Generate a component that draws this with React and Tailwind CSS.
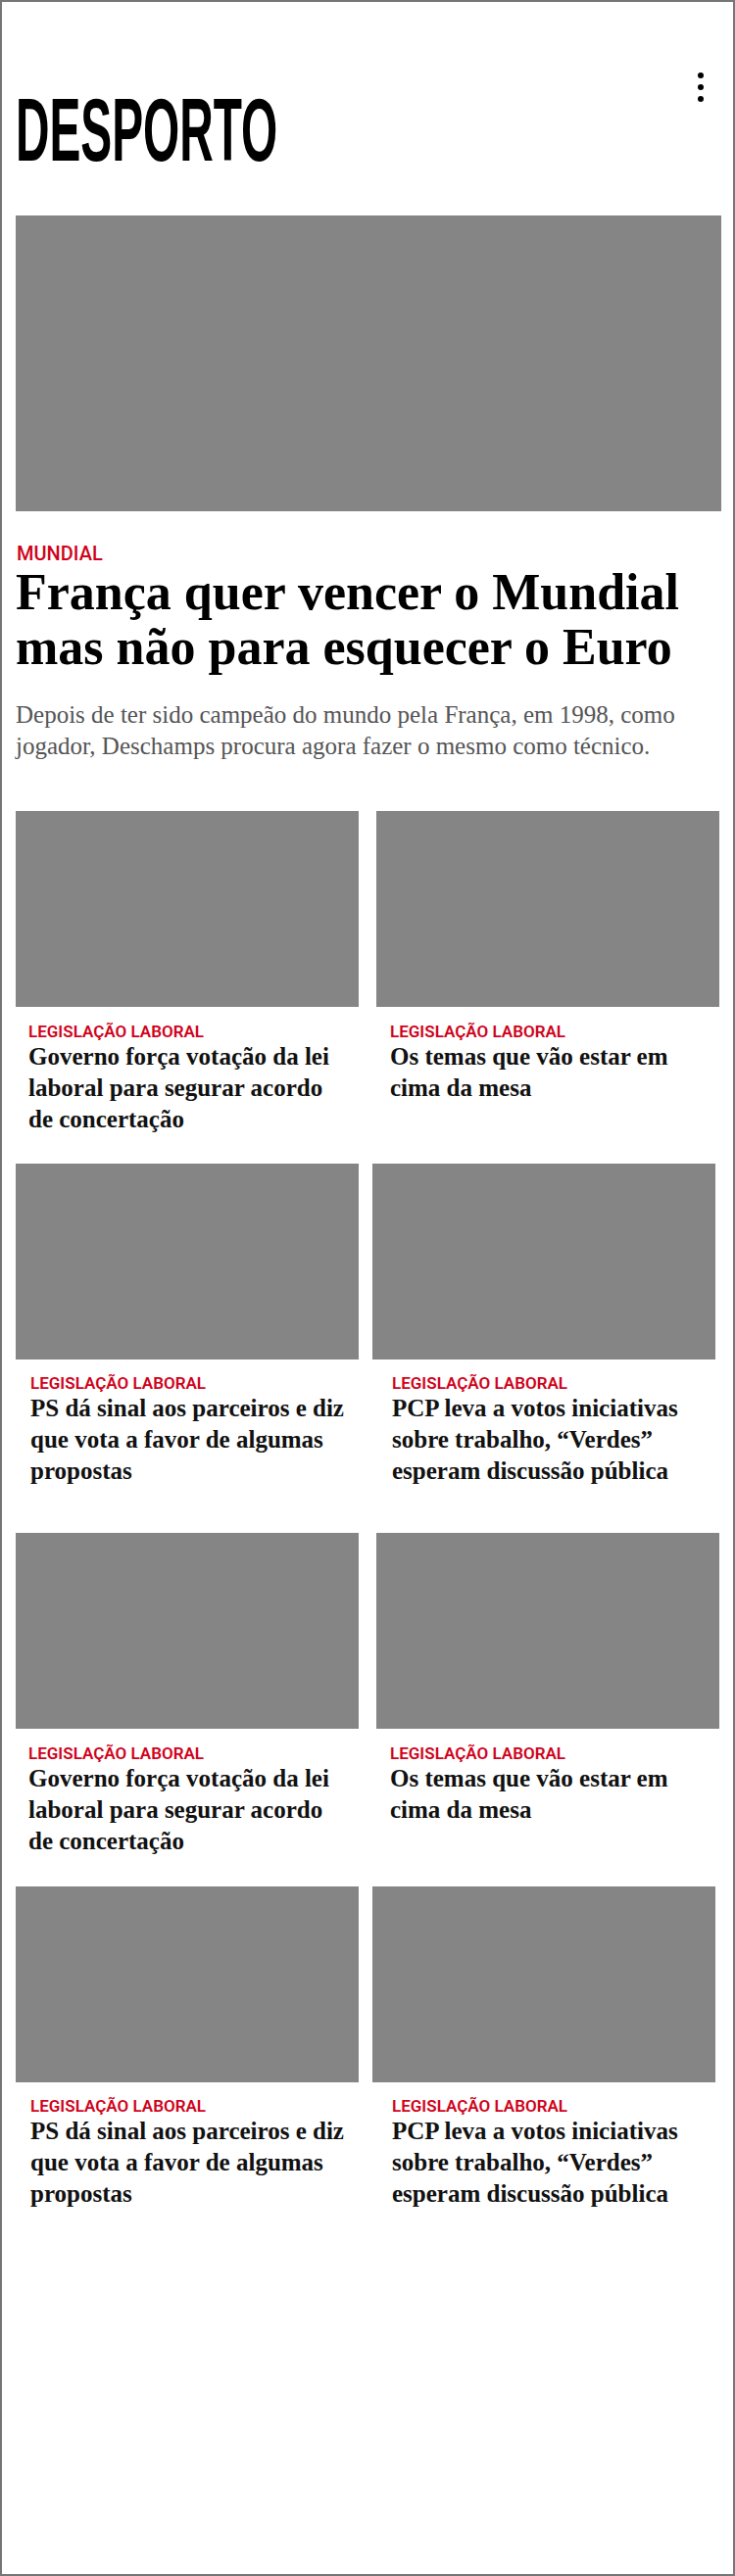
import React from 'react';

const rows = [
  {
    type: 'a',
    items: [
      { lines: ['Governo força votação da lei', 'laboral para segurar acordo', 'de concertação'] },
      { lines: ['Os temas que vão estar em', 'cima da mesa'] },
    ],
  },
  {
    type: 'b',
    items: [
      { lines: ['PS dá sinal aos parceiros e diz', 'que vota a favor de algumas', 'propostas'] },
      { lines: ['PCP leva a votos iniciativas', 'sobre trabalho, “Verdes”', 'esperam discussão pública'] },
    ],
  },
];

const serif = "font-['Liberation_Serif',_'Times_New_Roman',_serif]";

function Card({ lines, pad, labelGap }) {
  return (
    <div className="w-[350px] flex flex-col">
      <div className="w-[350px] h-[200px] bg-[#858585]" />
      <div className={pad}>
        <p className={`${labelGap} font-['Roboto',_sans-serif] font-semibold text-[17px] leading-[20px] text-[#d0021b] uppercase whitespace-nowrap`}>
          Legislação laboral
        </p>
        <h3 className={`${serif} font-bold text-[25px] leading-[32px] text-[#111] whitespace-nowrap`}>
          {lines.map((l, i) => (
            <span key={i} className="block">{l}</span>
          ))}
        </h3>
      </div>
    </div>
  );
}

function RowA({ items, className }) {
  return (
    <div className={`flex gap-[18px] ${className}`}>
      <Card lines={items[0].lines} pad="pl-[13px]" labelGap="mt-[15px]" />
      <Card lines={items[1].lines} pad="pl-[14px]" labelGap="mt-[15px]" />
    </div>
  );
}

function RowB({ items, className }) {
  return (
    <div className={`flex gap-[14px] ${className}`}>
      <Card lines={items[0].lines} pad="pl-[15px]" labelGap="mt-[14px]" />
      <Card lines={items[1].lines} pad="pl-[20px]" labelGap="mt-[14px]" />
    </div>
  );
}

export default function App() {
  return (
    <div className="w-[750px] h-[2630px] border-2 border-[#767676] bg-white overflow-hidden">
      <div className="pl-[14px] pr-[12px]">
        {/* header */}
        <div className="flex items-start justify-between pt-[72px]">
          <h1 className="mt-[13px] h-[91px] font-['Liberation_Sans',_Arial,_sans-serif] font-bold text-[91px] leading-none text-black scale-x-[0.525] origin-left whitespace-nowrap">
            DESPORTO
          </h1>
          <button className="mr-[18px] flex flex-col gap-[6px]" aria-label="menu">
            <span className="block w-[6px] h-[6px] rounded-full bg-black" />
            <span className="block w-[6px] h-[6px] rounded-full bg-black" />
            <span className="block w-[6px] h-[6px] rounded-full bg-black" />
          </button>
        </div>

        {/* hero */}
        <div className="mt-[42px] w-[720px] h-[302px] bg-[#858585]" />
        <p className="mt-[31px] pl-[1px] font-['Roboto',_sans-serif] font-medium text-[20px] leading-[24px] text-[#d0021b]">
          MUNDIAL
        </p>
        <h2 className={`${serif} font-bold text-[52px] leading-[56px] text-black whitespace-nowrap`}>
          França quer vencer o Mundial
          <br />
          mas não para esquecer o Euro
        </h2>
        <p className={`mt-[25px] ${serif} text-[25px] leading-[32px] text-[#555] whitespace-nowrap`}>
          Depois de ter sido campeão do mundo pela França, em 1998, como
          <br />
          jogador, Deschamps procura agora fazer o mesmo como técnico.
        </p>

        {/* grid */}
        <RowA items={rows[0].items} className="mt-[50px]" />
        <RowB items={rows[1].items} className="mt-[29px]" />
        <RowA items={rows[0].items} className="mt-[47px]" />
        <RowB items={rows[1].items} className="mt-[30px]" />
      </div>
    </div>
  );
}
